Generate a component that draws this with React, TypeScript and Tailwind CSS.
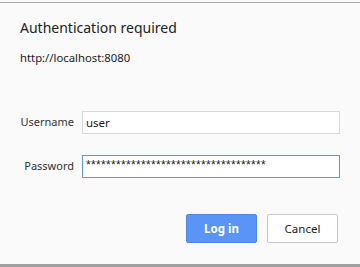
export default function App() {
  return (
    <div
      className="w-[360px] h-[267px] bg-[#fafafa] flex flex-col overflow-hidden"
      style={{ fontFamily: '"Noto Sans", "Open Sans", sans-serif' }}
    >
      <div className="h-[2px] bg-[#fafafa]" />
      <div className="h-px bg-[#a9a9a9]" />
      <div className="flex-1 flex flex-col px-5">
        <h1 className="mt-[15px] text-[14px] leading-[20px] text-[#222]">Authentication required</h1>
        <p className="mt-[12px] text-[11.3px] leading-[16px] text-[#222]">http://localhost:8080</p>

        <div className="mt-[45px] flex flex-col gap-[21px]">
          <div className="flex items-center gap-[8px]">
            <label className="w-[54px] text-right text-[11px] text-[#333] whitespace-nowrap">Username</label>
            <div className="w-[258px] h-[23px] border border-[#d8d8d8] bg-white flex items-center px-[3px] text-[11.5px] text-[#222]">
              user
            </div>
          </div>
          <div className="flex items-center gap-[8px]">
            <label className="w-[54px] text-right text-[11px] text-[#333] whitespace-nowrap">Password</label>
            <div
              className="w-[258px] h-[23px] border border-[#5b9bd5] bg-white flex items-center px-[3px] pb-[3px] text-[12px] tracking-[0.33px] text-[#222] overflow-hidden"
              style={{ fontFamily: '"Liberation Sans", Arial, sans-serif' }}
            >
              ************************************
            </div>
          </div>
        </div>

        <div className="mt-[36px] flex justify-end gap-[10px] pr-[2px]">
          <button className="w-[71px] h-[29px] rounded-[2px] bg-[#5a95f5] border border-[#4d86e6] text-white text-[11.5px] font-bold">
            Log in
          </button>
          <button className="w-[71px] h-[29px] rounded-[2px] bg-white border border-[#c8c8c8] text-[#222] text-[11.5px]">
            Cancel
          </button>
        </div>
      </div>
      <div className="h-[3px] bg-[#a0a0a0]" />
    </div>
  );
}
